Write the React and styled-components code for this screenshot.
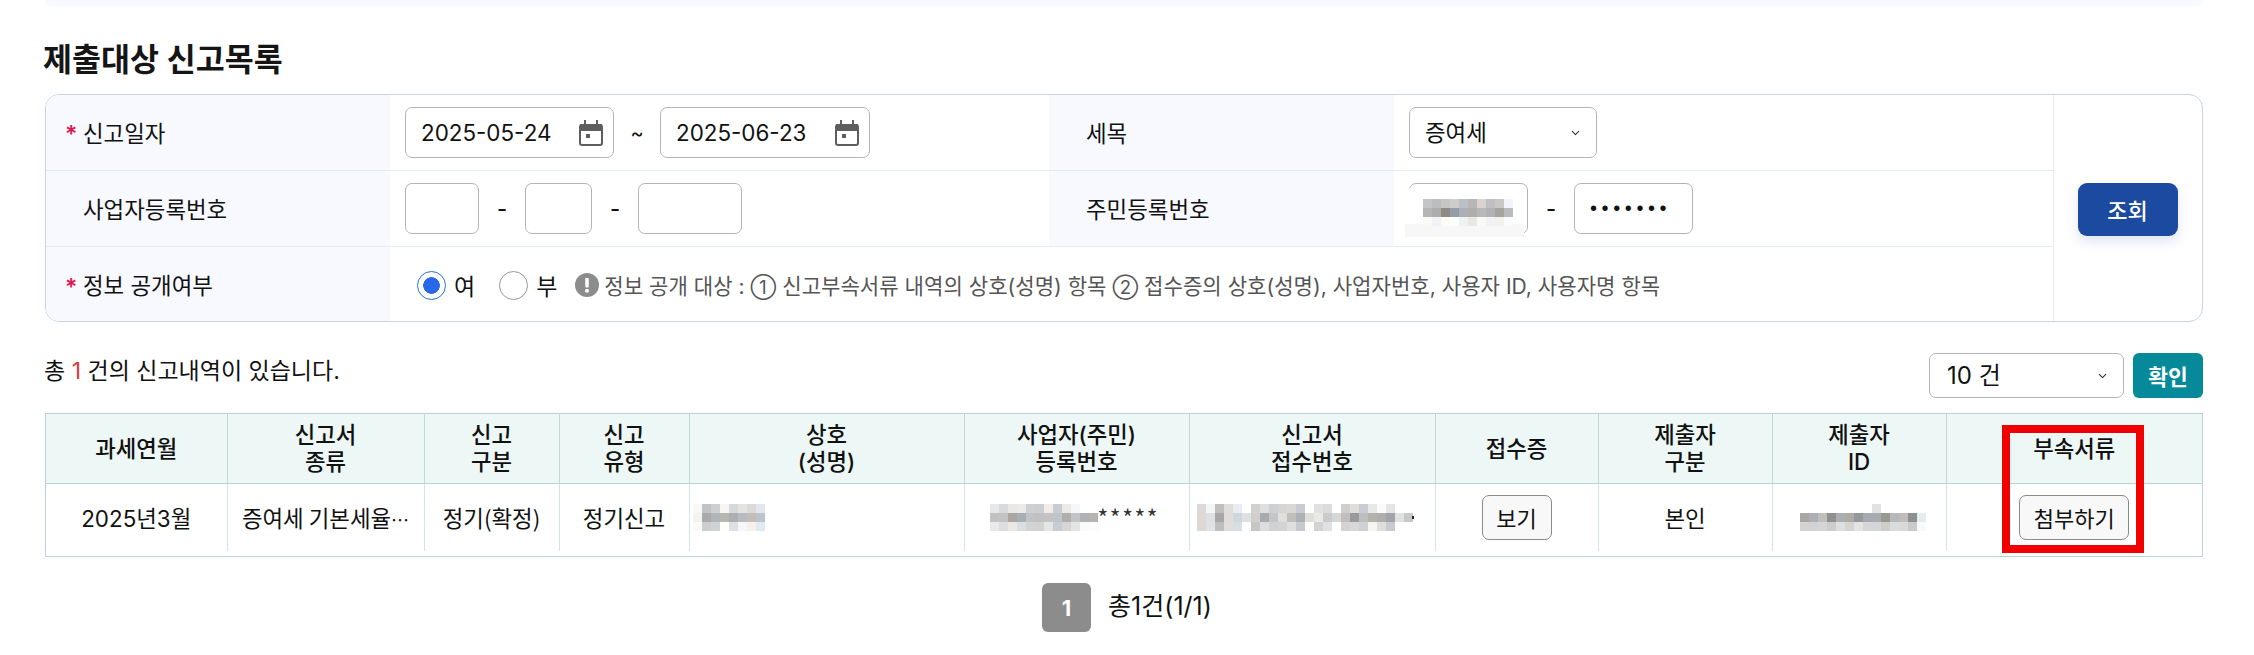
import React from 'react';
import styled, { createGlobalStyle } from 'styled-components';
import { ChevronDown } from 'lucide-react';

const GlobalStyle = createGlobalStyle`
  * { box-sizing: border-box; }
  html, body { margin: 0; background: #fff; }
  body {
    font-family: Inter, "Noto Sans CJK KR", sans-serif;
    color: #111;
    font-size: 22px;
  }
`;

const Page = styled.main`
  width: 2254px;
  height: 655px;
  overflow: hidden;
  padding: 0 51px 0 45px;
`;

const TopPanel = styled.div`
  height: 6px;
  background: #f7f9fe;
  border-radius: 0 0 14px 14px;
`;

const Title = styled.h2`
  margin: 0 0 0 -2px;
  height: 88px;
  padding-top: 35px;
  font-size: 31.5px;
  line-height: 38px;
  font-weight: 600;
  color: #151515;
`;

const SearchForm = styled.form`
  display: grid;
  grid-template-columns: 344px 659px 345px 659px 1fr;
  grid-template-rows: 76px 76px 76px;
  height: 228px;
  border: 1px solid #c9d5e6;
  border-radius: 14px;
  overflow: hidden;
`;

const LabelCell = styled.div`
  display: flex;
  align-items: center;
  padding: 0 0 2px 19px;
  background: #f7f9fe;
  font-size: 22.4px;
  font-weight: 400;
  border-bottom: ${(p) => (p.$last ? 'none' : '1px solid #e4ebf4')};
`;

const Star = styled.span`
  width: 18px;
  color: #e0174f;
  font-size: 23px;
  font-weight: 600;
  line-height: 1;
  padding-top: 6px;
`;

const ValueCell = styled.div`
  display: flex;
  align-items: center;
  padding-left: 15px;
  border-bottom: ${(p) => (p.$last ? 'none' : '1px solid #e4ebf4')};
  grid-column: ${(p) => (p.$wide ? '2 / 5' : 'auto')};
`;

const SearchCell = styled.div`
  grid-column: 5;
  grid-row: 1 / 4;
  display: flex;
  align-items: center;
  justify-content: center;
  border-left: 1px solid #e8edf3;
  padding-right: 1px;
`;

const SearchButton = styled.button`
  width: 100px;
  height: 53px;
  border: none;
  border-radius: 9px;
  background: #1c4aa0;
  color: #fff;
  font: inherit;
  font-weight: 500;
  box-shadow: 0 6px 12px rgba(28, 74, 160, 0.14);
`;

const DateBox = styled.div`
  display: flex;
  align-items: center;
  justify-content: space-between;
  width: ${(p) => p.$w}px;
  height: 51px;
  padding: 0 10px 0 15px;
  border: 1px solid #b4b4b4;
  border-radius: 7px;
  font-size: 22.4px;
`;

const Tilde = styled.span`
  width: 46px;
  text-align: center;
  font-size: 20px;
`;

const TextBox = styled.input`
  width: ${(p) => p.$w}px;
  height: 51px;
  padding: 0 15px;
  border: 1px solid #b4b4b4;
  border-radius: 7px;
  font: inherit;
  color: #111;
  background: #fff;
`;

const SecretBox = styled(TextBox)`
  font-family: "Liberation Sans", sans-serif;
  font-size: 20px;
  letter-spacing: 4.6px;
`;

const Dash = styled.span`
  width: ${(p) => p.$w}px;
  text-align: center;
  font-size: 22px;
  font-weight: 500;
`;

const MaskedBox = styled.div`
  position: relative;
`;

const MaskPatch = styled.div`
  position: absolute;
  left: -4px;
  top: 5px;
  width: 119px;
  height: 49px;
  background: linear-gradient(#fff 0, #fff 36px, #f7f7f7 36px);
`;

const MaskPixels = styled.div`
  position: absolute;
  left: 14px;
  top: 16px;
  line-height: 0;
`;

const SelectWrap = styled.div`
  position: relative;
  width: ${(p) => p.$w}px;
  height: ${(p) => p.$h}px;
  font-size: ${(p) => p.$size}px;
`;

const Select = styled.select`
  appearance: none;
  width: 100%;
  height: 100%;
  padding-left: ${(p) => p.$pad}px;
  border: 1px solid #b4b4b4;
  border-radius: 7px;
  background: #fff;
  color: #111;
  font: inherit;
`;

const Chevron = styled(ChevronDown)`
  position: absolute;
  right: 15px;
  top: 50%;
  transform: translateY(-50%);
  color: #333;
  pointer-events: none;
`;

const RadioGroup = styled.div`
  display: flex;
  align-items: center;
  margin-left: 12px;
`;

const RadioLabel = styled.label`
  display: inline-flex;
  align-items: center;
  gap: 8px;
  margin-right: ${(p) => p.$gap}px;
  font-size: 23px;
`;

const Radio = styled.input`
  appearance: none;
  margin: 0;
  width: 29px;
  height: 29px;
  border-radius: 50%;
  border: 1px solid #999;
  background: #fff;

  &:checked {
    border-color: #2a6fdb;
    background: radial-gradient(circle, #2868e8 0 8px, #fff 8.6px);
  }
`;

const Notice = styled.span`
  display: inline-flex;
  align-items: center;
  gap: 5px;
  color: #555;
  font-size: 21.1px;
  white-space: nowrap;
`;

const Circled = styled.span`
  font-size: 18.5px;
`;

const ListBar = styled.div`
  display: flex;
  align-items: center;
  justify-content: space-between;
  margin-top: 31px;
  height: 45px;
  margin-bottom: 15px;
`;

const Count = styled.p`
  margin: 0 0 13px -1px;
  font-size: 23px;

  em {
    font-style: normal;
    color: #e03a3a;
  }
`;

const BarActions = styled.div`
  display: flex;
  gap: 9px;
`;

const ConfirmButton = styled.button`
  width: 70px;
  height: 45px;
  border: none;
  border-radius: 6px;
  background: #068a99;
  color: #fff;
  font: inherit;
  font-size: 21.5px;
  font-weight: 600;
`;

const TableWrap = styled.div`
  position: relative;
  height: 144px;
  border: 1px solid #b9d3d6;
`;

const Table = styled.table`
  width: 2156px;
  table-layout: fixed;
  border-collapse: collapse;
`;

const Th = styled.th`
  height: 69px;
  padding: 0 8px;
  background: #edf7f6;
  border-bottom: 1px solid #b9d3d6;
  border-right: 1px solid #c0d8da;
  font-size: 22.3px;
  line-height: 27px;
  font-weight: 500;
  text-align: center;

  &:last-child { border-right: none; }
`;

const Td = styled.td`
  height: 68px;
  padding: 0 ${(p) => (p.$flush ? 0 : 8)}px;
  border-right: 1px solid #d5e4e6;
  font-size: 22.4px;
  text-align: center;
  white-space: nowrap;
  font-family: "Noto Sans CJK KR", sans-serif;

  &:last-child { border-right: none; }
`;

const DigitText = styled.span`
  font-family: Inter, "Noto Sans CJK KR", sans-serif;
`;

const Dots = styled.span`
  font-size: 18px;
`;

const MaskedCell = styled.div`
  display: flex;
  align-items: center;
  padding-left: ${(p) => p.$left}px;
`;

const Stars = styled.span`
  font-family: "Noto Sans CJK KR", sans-serif;
  font-size: 23px;
  letter-spacing: 1.6px;
  color: #333;
`;

const Speck = styled.span`
  width: 2px;
  height: 3px;
  margin-left: -1px;
  background: #1a2a35;
`;

const SmallButton = styled.button`
  width: ${(p) => p.$w}px;
  height: 45px;
  padding: 0;
  border: 1px solid #8a8a8a;
  border-radius: 7px;
  background: #f8f8f8;
  color: #111;
  font: inherit;
  font-size: 22px;
  vertical-align: middle;
`;

const Highlight = styled.div`
  position: absolute;
  left: 1956px;
  top: 11px;
  width: 142px;
  height: 128px;
  border: 8px solid #f00000;
  pointer-events: none;
`;

const Pagination = styled.nav`
  display: flex;
  align-items: center;
  justify-content: center;
  gap: 17px;
  margin-top: 26px;
  padding-left: 6px;
  font-size: 25px;
`;

const PageNumber = styled.span`
  display: flex;
  align-items: center;
  justify-content: center;
  width: 49px;
  height: 49px;
  border-radius: 6px;
  background: #8c8c8c;
  color: #fff;
  font-size: 22px;
  font-weight: 700;
`;

const PageInfo = styled.span`
  margin-bottom: 7px;
`;

const CalendarIcon = () => (
  <svg width="24" height="26" viewBox="0 0 24 26" fill="none">
    <rect x="1" y="5" width="22" height="20" rx="2" stroke="#5e5e5e" strokeWidth="2" />
    <rect x="1" y="4" width="22" height="7" fill="#5e5e5e" />
    <rect x="5" y="0" width="2" height="5" fill="#5e5e5e" />
    <rect x="17" y="0" width="2" height="5" fill="#5e5e5e" />
    <rect x="7" y="14" width="4" height="4" fill="#5e5e5e" />
  </svg>
);

const InfoIcon = () => (
  <svg width="24" height="24" viewBox="0 0 24 24">
    <circle cx="12" cy="12" r="12" fill="#8c8c8c" />
    <rect x="10.2" y="5" width="3.6" height="9.5" rx="1" fill="#fff" />
    <rect x="10.2" y="16" width="3.6" height="3.4" rx="1" fill="#fff" />
  </svg>
);

const MosaicSvg = styled.svg`
  display: block;
  flex: none;
`;

// redacted values in the screenshot are 9px mosaics, one array per row
const Mosaic = ({ rows }) => (
  <MosaicSvg width={Math.max(...rows.map((r) => r.length)) * 9} height={rows.length * 9}>
    {rows.map((row, y) =>
      row.map((c, x) => (c ? <rect key={`${x}-${y}`} x={x * 9} y={y * 9} width="9" height="9" fill={c} /> : null))
    )}
  </MosaicSvg>
);

const juminMask = [
  ['#c5c5c5', '#bbbdbf', '#c6c6c6', '#cfcdca', '#bcbfc3', '#b6b6b5', '#d8d5d1', '#bdbfc3', '#cbc7c4', '#f1f5f9'],
  ['#b5b5b5', '#adadad', '#8f8a84', '#959ea8', '#adb0b3', '#aeaead', '#b8b8b9', '#b0b3b6', '#a8a39f', '#b9bbbe'],
  ['#fbf9f5', '#f0f2f5', '#fdfbf7', '#fdfdfb', '#eff1f3', '#e9e8e5', '#f9f9f9', '#f0f2f4', '#f3f1ed', '#fafbfc'],
];

const nameMask = [
  ['#f8f8f5', '#c2c3c4', '#cdd0d3', '#f8f6f0', '#d5d8dd', '#e3e3e1', '#dcd9d6', '#e2e7ef'],
  ['#f3f3f0', '#a9aaab', '#b0b5ba', '#b5b5b2', '#adaeaf', '#b7bcc1', '#c2bdb8', '#bcc4cd'],
  ['#fafaf7', '#cccdcd', '#d0d3d5', '#fffffa', '#dfe0e4', '#f5f7f8', '#f5f1eb', '#e4e8f0'],
];

const bizMask = [
  ['#e8e8e8', '#d9dadb', '#e8e8e8', '#ede9e6', '#cfd0d1', '#cdcecf', '#f2ece8', '#c9cdd1', '#ece9e7', '#f5f7fb', '', ''],
  ['#c2c2c2', '#c3c3c3', '#aba6a1', '#a7afb6', '#c2c3c4', '#c0c1c2', '#c3c3c3', '#c1c5c8', '#b1afad', '#c4c4c4', '#aeb2b6', '#b5b4b2'],
  ['#e9e9e9', '#dddedf', '#eae7e5', '#dadee2', '#d2d3d5', '#d3d2d0', '#e5e5e3', '#c7ccd0', '#d7d6d4', '#e2e4e6', '#fafafa', '#fcfcfc'],
];

const receiptMask = [
  ['#dcd9d6', '#f3f5f7', '#bfbfbf', '#e0dedc', '#e8ebf0', '', '#d2d1cf', '#dedfdf', '#cfd0d2', '#d5d5d5', '#d9d8d6', '#c8cbcf', '', '#e2e1e0', '#dbdcde', '', '#d0cecc', '#e0dedc', '#c9ccd0', '#e8e8e8', '#fafafa', '#e5e5e3', '', ''],
  ['#e0d8d3', '#dde1e5', '#a7a7a7', '#e1dcd9', '#cfd6dd', '#dfe0e0', '#d0cfcd', '#a9aaae', '#c3c5c7', '#e0dfdc', '#c1bebb', '#acb1b6', '#dededb', '#e9e9e7', '#c8cacc', '#d6d7d9', '#c3bebb', '#989a9f', '#bcbec0', '#b5b2ad', '#b0aeab', '#a0a3a7', '#dfe1e2', '#c9c8c7'],
  ['#dcd9d4', '#e0e3e6', '#bebebe', '#e0dddb', '#d9dee3', '', '#c6c6c4', '#dcdddd', '#cfd1d4', '#d3d3d3', '#dfdfdd', '#c6cace', '', '#d4d3d2', '#e0e1e3', '', '#d6d4d2', '#d9d8d8', '#ced0d4', '#f4f4f2', '#dededc', '#c8cad0', '', ''],
];

const idMask = [
  ['', '', '', '', '', '', '', '', '#e2e2e2', '', '', '', '', ''],
  ['#a8a5a2', '#abb0b5', '#c1bfbc', '#8f8f90', '#abaeb2', '#aeaba5', '#96979a', '#a7aab0', '#a8abb0', '#9a9893', '#b5b9bd', '#bfbcb9', '#8e8f92', '#e5ecf1'],
  ['#d5d3d0', '#d1d3d4', '#d3d5d6', '#cdcdcc', '#dedfdf', '#d6d4d0', '#e3e3e3', '#d4d6d8', '#d4d6da', '#d0cdc8', '#d9dcdc', '#d8d9d9', '#cacaca', '#f8fbfd'],
];

const columns = [181, 197, 135, 130, 275, 225, 246, 163, 174, 174, 256];

const headers = [
  ['과세연월'],
  ['신고서', '종류'],
  ['신고', '구분'],
  ['신고', '유형'],
  ['상호', '(성명)'],
  ['사업자(주민)', '등록번호'],
  ['신고서', '접수번호'],
  ['접수증'],
  ['제출자', '구분'],
  ['제출자', 'ID'],
  ['부속서류'],
];

const App = () => {
  return (
    <Page>
      <GlobalStyle />
      <TopPanel />
      <Title>제출대상 신고목록</Title>

      <SearchForm>
        <LabelCell><Star>*</Star>신고일자</LabelCell>
        <ValueCell>
          <DateBox $w={209}>2025-05-24<CalendarIcon /></DateBox>
          <Tilde>~</Tilde>
          <DateBox $w={210}>2025-06-23<CalendarIcon /></DateBox>
        </ValueCell>
        <LabelCell><Star />세목</LabelCell>
        <ValueCell>
          <SelectWrap $w={188} $h={51} $size={22.4}>
            <Select $pad={15} defaultValue="증여세">
              <option>증여세</option>
            </Select>
            <Chevron size={13} strokeWidth={2} />
          </SelectWrap>
        </ValueCell>
        <SearchCell>
          <SearchButton type="button">조회</SearchButton>
        </SearchCell>

        <LabelCell><Star />사업자등록번호</LabelCell>
        <ValueCell>
          <TextBox $w={74} readOnly />
          <Dash $w={46}>-</Dash>
          <TextBox $w={67} readOnly />
          <Dash $w={46}>-</Dash>
          <TextBox $w={104} readOnly />
        </ValueCell>
        <LabelCell><Star />주민등록번호</LabelCell>
        <ValueCell>
          <MaskedBox>
            <TextBox $w={119} readOnly />
            <MaskPatch />
            <MaskPixels><Mosaic rows={juminMask} /></MaskPixels>
          </MaskedBox>
          <Dash $w={46}>-</Dash>
          <SecretBox $w={119} type="password" value="1234567" readOnly />
        </ValueCell>

        <LabelCell $last><Star>*</Star>정보 공개여부</LabelCell>
        <ValueCell $wide $last>
          <RadioGroup>
            <RadioLabel $gap={24}>
              <Radio type="radio" name="open" defaultChecked />여
            </RadioLabel>
            <RadioLabel $gap={18}>
              <Radio type="radio" name="open" />부
            </RadioLabel>
          </RadioGroup>
          <Notice>
            <InfoIcon />
            <span>
              정보 공개 대상 : <Circled>①</Circled> 신고부속서류 내역의 상호(성명) 항목 <Circled>②</Circled> 접수증의 상호(성명), 사업자번호, 사용자 ID, 사용자명 항목
            </span>
          </Notice>
        </ValueCell>
      </SearchForm>

      <ListBar>
        <Count>총 <em>1</em> 건의 신고내역이 있습니다.</Count>
        <BarActions>
          <SelectWrap $w={195} $h={45} $size={24}>
            <Select $pad={17} defaultValue="10 건">
              <option>10 건</option>
            </Select>
            <Chevron size={13} strokeWidth={2} />
          </SelectWrap>
          <ConfirmButton type="button">확인</ConfirmButton>
        </BarActions>
      </ListBar>

      <TableWrap>
        <Table>
          <colgroup>
            {columns.map((w, i) => <col key={i} width={w} />)}
          </colgroup>
          <thead>
            <tr>
              {headers.map((lines, i) => (
                <Th key={i}>{lines.map((l) => <div key={l}>{l}</div>)}</Th>
              ))}
            </tr>
          </thead>
          <tbody>
            <tr>
              <Td><DigitText>2025년3월</DigitText></Td>
              <Td>증여세 기본세율<Dots>…</Dots></Td>
              <Td>정기(확정)</Td>
              <Td>정기신고</Td>
              <Td $flush><MaskedCell $left={3}><Mosaic rows={nameMask} /></MaskedCell></Td>
              <Td $flush>
                <MaskedCell $left={25}>
                  <Mosaic rows={bizMask} />
                  <Stars>*****</Stars>
                </MaskedCell>
              </Td>
              <Td $flush><MaskedCell $left={7}><Mosaic rows={receiptMask} /><Speck /></MaskedCell></Td>
              <Td><SmallButton type="button" $w={70}>보기</SmallButton></Td>
              <Td>본인</Td>
              <Td $flush><MaskedCell $left={27}><Mosaic rows={idMask} /></MaskedCell></Td>
              <Td><SmallButton type="button" $w={110}>첨부하기</SmallButton></Td>
            </tr>
          </tbody>
        </Table>
        <Highlight />
      </TableWrap>

      <Pagination>
        <PageNumber>1</PageNumber>
        <PageInfo>총1건(1/1)</PageInfo>
      </Pagination>
    </Page>
  );
};

export default App;
